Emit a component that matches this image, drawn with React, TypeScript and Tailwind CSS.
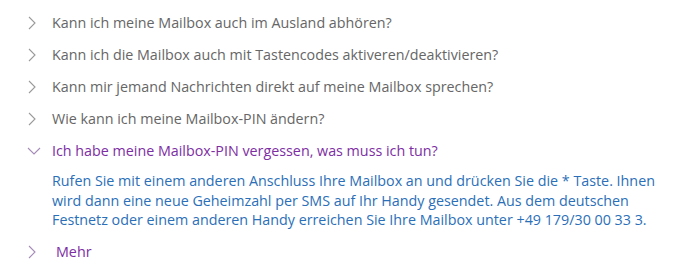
const questions = [
    "Kann ich meine Mailbox auch im Ausland abhören?",
    "Kann ich die Mailbox auch mit Tastencodes aktiveren/deaktivieren?",
    "Kann mir jemand Nachrichten direkt auf meine Mailbox sprechen?",
    "Wie kann ich meine Mailbox-PIN ändern?",
];

function Right({ className }: { className: string }) {
    return (
        <svg width="10" height="14" viewBox="0 0 10 14" className={className} fill="none">
            <polyline points="2,1 8,7 2,13" stroke="currentColor" strokeWidth="1.1" />
        </svg>
    );
}

function Down({ className }: { className: string }) {
    return (
        <svg width="14" height="10" viewBox="0 0 14 10" className={className} fill="none">
            <polyline points="1,2 7,8 13,2" stroke="currentColor" strokeWidth="1.1" />
        </svg>
    );
}

export default function App() {
    return (
        <div className="w-[700px] h-[279px] bg-white pt-[7px] font-['Open_Sans',sans-serif] text-[14.3px]">
            <ul className="flex flex-col">
                {questions.map((q) => (
                    <li key={q} className="flex items-center h-8 pl-[27px]">
                        <div className="w-[14px] flex justify-start">
                            <Right className="text-[#9a9a9a] shrink-0" />
                        </div>
                        <span className="ml-[11px] text-[#666666]">{q}</span>
                    </li>
                ))}
                <li className="flex items-center h-8 pl-[27px]">
                    <div className="w-[14px] flex justify-start">
                        <Down className="text-[#a58bb8] shrink-0" />
                    </div>
                    <span className="ml-[11px] text-[#7d2ea3]">Ich habe meine Mailbox-PIN vergessen, was muss ich tun?</span>
                </li>
            </ul>
            <p className="ml-[52px] w-[620px] pt-[4px] leading-[19.5px] text-[#2b6fb8]">
                Rufen Sie mit einem anderen Anschluss Ihre Mailbox an und drücken Sie die * Taste. Ihnen wird dann eine neue
                Geheimzahl per SMS auf Ihr Handy gesendet. Aus dem deutschen Festnetz oder einem anderen Handy erreichen Sie Ihre
                Mailbox unter +49 179/30 00 33 3.
            </p>
            <div className="flex items-center h-8 pl-[27px] mt-[6px]">
                <div className="w-[14px] flex justify-start">
                    <Right className="text-[#a58bb8] shrink-0" />
                </div>
                <span className="ml-[15px] text-[#7d2ea3]">Mehr</span>
            </div>
        </div>
    );
}
